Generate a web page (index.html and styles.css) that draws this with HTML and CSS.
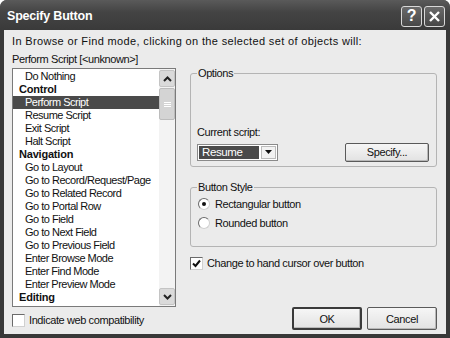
FILE: index.html
```html
<!DOCTYPE html>
<html lang="en">
<head>
  <meta charset="UTF-8">
  <title>Specify Button</title>
  <link rel="stylesheet" href="styles.css">
</head>
<body>

<div class="window">
  <!-- TITLE BAR -->
  <div class="titlebar">
    <span class="title">Specify Button</span>
    <div class="title-buttons">
      <span class="tbtn help">?</span>
      <span class="tbtn">
        <svg width="13" height="13" viewBox="0 0 13 13"><path d="M2 2 L11 11 M11 2 L2 11" stroke="#fff" stroke-width="2.4" fill="none"/></svg>
      </span>
    </div>
  </div>

  <div class="client">
    <p class="line intro">In Browse or Find mode, clicking on the selected set of objects will:</p>
    <p class="line current">Perform Script [&lt;unknown&gt;]</p>

    <div class="main">
      <div class="left">
        <div class="listbox">
          <ul class="items">
            <li class="item">Do Nothing</li>
            <li class="item head">Control</li>
            <li class="item selected">Perform Script</li>
            <li class="item">Resume Script</li>
            <li class="item">Exit Script</li>
            <li class="item">Halt Script</li>
            <li class="item head">Navigation</li>
            <li class="item">Go to Layout</li>
            <li class="item">Go to Record/Request/Page</li>
            <li class="item">Go to Related Record</li>
            <li class="item">Go to Portal Row</li>
            <li class="item">Go to Field</li>
            <li class="item">Go to Next Field</li>
            <li class="item">Go to Previous Field</li>
            <li class="item">Enter Browse Mode</li>
            <li class="item">Enter Find Mode</li>
            <li class="item">Enter Preview Mode</li>
            <li class="item head">Editing</li>
          </ul>
          <div class="scrollbar">
            <span class="sb-btn">
              <svg width="9" height="6" viewBox="0 0 9 6"><path d="M1 5 L4.5 1.5 L8 5" stroke="#222" stroke-width="2" fill="none"/></svg>
            </span>
            <span class="sb-thumb">
              <svg width="7" height="7" viewBox="0 0 7 7"><path d="M0 1.5 H7 M0 3.5 H7 M0 5.5 H7" stroke="#fff" stroke-width="1"/></svg>
            </span>
            <span class="sb-track"></span>
            <span class="sb-btn">
              <svg width="9" height="6" viewBox="0 0 9 6"><path d="M1 1 L4.5 4.5 L8 1" stroke="#222" stroke-width="2" fill="none"/></svg>
            </span>
          </div>
        </div>
        <label class="check">
          <span class="box"></span>
          Indicate web compatibility
        </label>
      </div>

      <div class="right">
        <fieldset class="group options">
          <legend>Options</legend>
          <div class="label">Current script:</div>
          <div class="script-row">
            <div class="combo">
              <span class="combo-value">Resume</span>
              <span class="combo-arrow">
                <svg width="7" height="4" viewBox="0 0 7 4"><path d="M0 0 H7 L3.5 4 Z" fill="#111"/></svg>
              </span>
            </div>
            <span class="btn specify">Specify...</span>
          </div>
        </fieldset>

        <fieldset class="group style">
          <legend>Button Style</legend>
          <label class="radio-row"><span class="radio on"></span>Rectangular button</label>
          <label class="radio-row"><span class="radio"></span>Rounded button</label>
        </fieldset>

        <label class="check hand">
          <span class="box">
            <svg width="9" height="9" viewBox="0 0 9 9"><path d="M1 4.5 L3.5 7 L8 1.5" stroke="#111" stroke-width="2" fill="none"/></svg>
          </span>
          Change to hand cursor over button
        </label>

        <div class="actions">
          <span class="btn default">OK</span>
          <span class="btn">Cancel</span>
        </div>
      </div>
    </div>
  </div>
</div>

</body>
</html>
```

FILE: styles.css
```css
body {
  margin: 0;
  background: #fff;
  font-family: "Liberation Sans", Arial, sans-serif;
  font-size: 11px;
  letter-spacing: -0.4px;
  color: #111;
}

.window {
  width: 450px;
  height: 338px;
  background: #383838;
  border-radius: 7px 7px 0 0;
  display: flex;
  flex-direction: column;
}

/* title bar */
.titlebar {
  height: 30px;
  display: flex;
  align-items: center;
  justify-content: space-between;
  padding: 0 5px 0 7px;
  background: linear-gradient(#5a5a5a, #444 40%, #3a3a3a);
  border-radius: 7px 7px 0 0;
}

.title {
  color: #fff;
  font-weight: bold;
  font-size: 12.5px;
  letter-spacing: -0.2px;
  margin-top: 1px;
}

.title-buttons {
  display: flex;
  gap: 2px;
  margin-top: 2px;
}

.tbtn {
  width: 19px;
  height: 19px;
  border: 1px solid #d8d8d8;
  border-radius: 3px;
  background: linear-gradient(#6a6a6a, #474747);
  display: flex;
  align-items: center;
  justify-content: center;
  color: #fff;
}

.tbtn.help {
  font-size: 16px;
  font-weight: bold;
  line-height: 1;
}

/* client area */
.client {
  flex: 1;
  margin: 0 4px 4px;
  background: #ebebeb;
  padding: 5px 9px 4px 8px;
  display: flex;
  flex-direction: column;
}

.line {
  margin: 0;
  line-height: 13px;
}

.intro {
  letter-spacing: 0.35px;
}

.current {
  margin-top: 5px;
}

.main {
  flex: 1;
  margin-top: 2px;
  display: flex;
  gap: 14px;
}

.left {
  width: 164px;
  display: flex;
  flex-direction: column;
}

.listbox {
  height: 239px;
  box-sizing: border-box;
  border: 1px solid #7a7a7a;
  background: #fff;
  display: flex;
}

.items {
  flex: 1;
  list-style: none;
  margin: 0;
  padding: 1px 0 0;
  overflow: hidden;
  letter-spacing: -0.5px;
}

.item {
  height: 13px;
  line-height: 13px;
  padding-left: 12px;
  white-space: nowrap;
}

.item.head {
  font-weight: bold;
  padding-left: 6px;
  letter-spacing: -0.2px;
}

.item.selected {
  background: #4a4a4a;
  color: #fff;
}

.scrollbar {
  width: 16px;
  display: flex;
  flex-direction: column;
  background: #f3f3f3;
}

.sb-btn {
  height: 15px;
  margin: 1px 0;
  border: 1px solid #c4c4c4;
  border-radius: 2px;
  background: #dadada;
  display: flex;
  align-items: center;
  justify-content: center;
}

.sb-thumb {
  height: 30px;
  border: 1px solid #bcbcbc;
  border-radius: 2px;
  background: #d4d4d4;
  display: flex;
  align-items: center;
  justify-content: center;
}

.sb-track {
  flex: 1;
}

.check {
  display: flex;
  align-items: center;
  gap: 4px;
  height: 14px;
  margin-top: 6px;
}

.box {
  width: 11px;
  height: 11px;
  border: 1px solid #6a6a6a;
  border-right-color: #d0d0d0;
  border-bottom-color: #d0d0d0;
  background: #fff;
  display: flex;
  align-items: center;
  justify-content: center;
}

/* right column */
.right {
  width: 247px;
  display: flex;
  flex-direction: column;
}

.group {
  margin: 0;
  border: 1px solid #b4b4b4;
  border-radius: 3px;
  padding: 0 7px 5px 6px;
}

.group legend {
  padding: 0 1px;
  line-height: 13px;
}

.options {
  margin-top: -1px;
}

.label {
  margin-top: 46px;
  line-height: 13px;
}

.script-row {
  margin-top: 4px;
  height: 18px;
  display: flex;
  align-items: center;
  justify-content: space-between;
}

.combo {
  width: 81px;
  height: 17px;
  box-sizing: border-box;
  border: 1px solid #8a8a8a;
  background: #fff;
  display: flex;
  padding: 1px;
  gap: 2px;
}

.combo-value {
  flex: 1;
  background: #4a4a4a;
  color: #fff;
  line-height: 13px;
  padding-left: 3px;
  font-size: 11.5px;
}

.combo-arrow {
  width: 15px;
  background: #f2f2f2;
  border: 1px solid #bbb;
  box-sizing: border-box;
  display: flex;
  align-items: center;
  justify-content: center;
}

.btn {
  width: 70px;
  height: 23px;
  box-sizing: border-box;
  border: 1px solid #5a5a5a;
  border-radius: 2px;
  background: linear-gradient(#f6f6f6, #e2e2e2);
  box-shadow: inset -1px -1px 0 #b8b8b8;
  display: flex;
  align-items: center;
  justify-content: center;
}

.btn.specify {
  width: 84px;
  height: 19px;
}

.btn.default {
  border: 2px solid #3a3a3a;
}

.style {
  margin-top: 14px;
  padding-bottom: 14px;
}

.radio-row {
  height: 19px;
  display: flex;
  align-items: center;
  gap: 5px;
  padding-left: 1px;
}

.radio {
  width: 10px;
  height: 10px;
  border: 1px solid #6a6a6a;
  border-right-color: #d0d0d0;
  border-bottom-color: #d0d0d0;
  border-radius: 50%;
  background: #fff;
  display: flex;
  align-items: center;
  justify-content: center;
}

.radio.on::after {
  content: "";
  width: 4px;
  height: 4px;
  border-radius: 50%;
  background: #111;
}

.check.hand {
  margin-top: 9px;
}

.actions {
  margin-top: auto;
  display: flex;
  justify-content: flex-end;
  gap: 5px;
}
```
